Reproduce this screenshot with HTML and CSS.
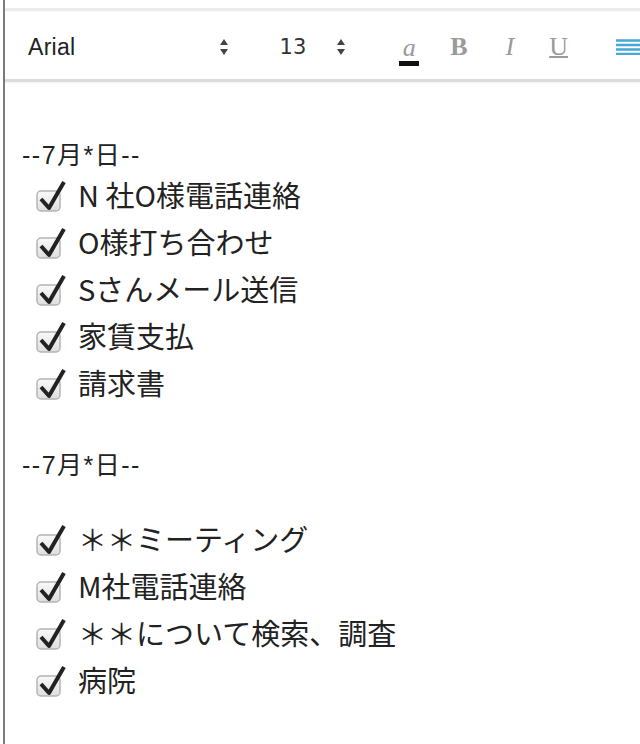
FILE: index.html
```html
<!DOCTYPE html>
<html lang="ja">
<head>
  <meta charset="UTF-8" />
  <meta name="viewport" content="width=device-width, initial-scale=1.0"/>
  <title>メモ</title>
  <link rel="stylesheet" href="styles.css">
</head>
<body>
  <div class="frame">
    <div class="topline"></div>
    <!-- Toolbar -->
    <div class="toolbar">
      <span class="font-name">Arial</span>
      <svg class="spin" width="10" height="20" viewBox="0 0 10 20"><path d="M5 2 L9 8 L1 8 Z M1 12 L9 12 L5 18 Z" fill="#444"/></svg>
      <span class="font-size">13</span>
      <svg class="spin" width="10" height="20" viewBox="0 0 10 20"><path d="M5 2 L9 8 L1 8 Z M1 12 L9 12 L5 18 Z" fill="#444"/></svg>
      <span class="fmt fmt-color">a</span>
      <span class="fmt fmt-bold">B</span>
      <span class="fmt fmt-italic">I</span>
      <span class="fmt fmt-under">U</span>
      <svg class="align" width="24" height="16" viewBox="0 0 24 16"><path d="M0 1.5 H24 M0 6 H24 M0 10.5 H24 M0 15 H24" stroke="#45a8d6" stroke-width="2.6"/></svg>
    </div>

    <!-- Note body -->
    <div class="note">
      <div class="day first">--7月*日--</div>
      <div class="item"><svg class="check" width="32" height="36" viewBox="0 0 32 36"><rect x="3" y="13" width="23" height="20" rx="4" fill="url(#box)" stroke="#b4b4b4" stroke-width="1.5"/><path d="M7 21 L15 30 L30 4" fill="none" stroke="#222" stroke-width="4" stroke-linejoin="round"/></svg><span>N 社O様電話連絡</span></div>
      <div class="item"><svg class="check" width="32" height="36" viewBox="0 0 32 36"><rect x="3" y="13" width="23" height="20" rx="4" fill="url(#box)" stroke="#b4b4b4" stroke-width="1.5"/><path d="M7 21 L15 30 L30 4" fill="none" stroke="#222" stroke-width="4" stroke-linejoin="round"/></svg><span>O様打ち合わせ</span></div>
      <div class="item"><svg class="check" width="32" height="36" viewBox="0 0 32 36"><rect x="3" y="13" width="23" height="20" rx="4" fill="url(#box)" stroke="#b4b4b4" stroke-width="1.5"/><path d="M7 21 L15 30 L30 4" fill="none" stroke="#222" stroke-width="4" stroke-linejoin="round"/></svg><span>Sさんメール送信</span></div>
      <div class="item"><svg class="check" width="32" height="36" viewBox="0 0 32 36"><rect x="3" y="13" width="23" height="20" rx="4" fill="url(#box)" stroke="#b4b4b4" stroke-width="1.5"/><path d="M7 21 L15 30 L30 4" fill="none" stroke="#222" stroke-width="4" stroke-linejoin="round"/></svg><span>家賃支払</span></div>
      <div class="item"><svg class="check" width="32" height="36" viewBox="0 0 32 36"><rect x="3" y="13" width="23" height="20" rx="4" fill="url(#box)" stroke="#b4b4b4" stroke-width="1.5"/><path d="M7 21 L15 30 L30 4" fill="none" stroke="#222" stroke-width="4" stroke-linejoin="round"/></svg><span>請求書</span></div>

      <div class="day second">--7月*日--</div>
      <div class="item gap"><svg class="check" width="32" height="36" viewBox="0 0 32 36"><rect x="3" y="13" width="23" height="20" rx="4" fill="url(#box)" stroke="#b4b4b4" stroke-width="1.5"/><path d="M7 21 L15 30 L30 4" fill="none" stroke="#222" stroke-width="4" stroke-linejoin="round"/></svg><span>＊＊ミーティング</span></div>
      <div class="item"><svg class="check" width="32" height="36" viewBox="0 0 32 36"><rect x="3" y="13" width="23" height="20" rx="4" fill="url(#box)" stroke="#b4b4b4" stroke-width="1.5"/><path d="M7 21 L15 30 L30 4" fill="none" stroke="#222" stroke-width="4" stroke-linejoin="round"/></svg><span>M社電話連絡</span></div>
      <div class="item"><svg class="check" width="32" height="36" viewBox="0 0 32 36"><rect x="3" y="13" width="23" height="20" rx="4" fill="url(#box)" stroke="#b4b4b4" stroke-width="1.5"/><path d="M7 21 L15 30 L30 4" fill="none" stroke="#222" stroke-width="4" stroke-linejoin="round"/></svg><span>＊＊について検索、調査</span></div>
      <div class="item"><svg class="check" width="32" height="36" viewBox="0 0 32 36"><rect x="3" y="13" width="23" height="20" rx="4" fill="url(#box)" stroke="#b4b4b4" stroke-width="1.5"/><path d="M7 21 L15 30 L30 4" fill="none" stroke="#222" stroke-width="4" stroke-linejoin="round"/></svg><span>病院</span></div>
    </div>
  </div>

  <!-- shared gradient for the check boxes -->
  <svg width="0" height="0" class="defs">
    <defs>
      <linearGradient id="box" x1="0" y1="0" x2="0" y2="1">
        <stop offset="0" stop-color="#fafafa"/>
        <stop offset="1" stop-color="#dedede"/>
      </linearGradient>
    </defs>
  </svg>
</body>
</html>
```

FILE: styles.css
```css
body { margin: 0; background: #fff; font-family: "Liberation Sans", "Noto Sans CJK JP", sans-serif; color: #222; }
.frame { margin-left: 3px; border-left: 2px solid #7c7c7c; min-height: 744px; }
.topline { height: 8px; border-bottom: 3px solid #ececec; }
.defs { position: absolute; }

/* Toolbar */
.toolbar { display: flex; align-items: center; height: 64px; padding-top: 4px; border-bottom: 3px solid #dcdcdc; box-shadow: 0 1px 2px rgba(0,0,0,0.06); }
.font-name { width: 199px; padding-left: 23px; font-size: 23px; letter-spacing: 0.3px; color: #222; }
.spin { flex: none; }
.font-size { width: 59px; margin-left: 51px; font-family: "DejaVu Sans", sans-serif; font-size: 21px; color: #333; }
.fmt { font-family: "Liberation Serif", serif; font-size: 26px; color: #9a9a9a; line-height: 30px; }
.fmt-color { margin-left: 53px; width: 21px; text-align: center; font-style: italic; border-bottom: 5px solid #111; line-height: 26px; margin-top: 6px; }
.fmt-bold { margin-left: 31px; font-weight: bold; }
.fmt-italic { margin-left: 38px; font-style: italic; }
.fmt-under { margin-left: 35px; text-decoration: underline; text-decoration-thickness: 2px; text-underline-offset: 1px; }
.align { margin-left: 48px; flex: none; }

/* Note body */
.note { padding-left: 17px; }
.day { font-size: 25px; line-height: 32px; letter-spacing: 1.5px; }
.day.first { margin-top: 57px; }
.day.second { margin-top: 43px; }
.item { display: flex; align-items: flex-start; height: 47px; line-height: 47px; font-size: 29px; font-family: "Noto Sans CJK JP", sans-serif; }
.item.gap { margin-top: 34px; }
.check { margin: 7px 12px 0 12px; flex: none; }
```
